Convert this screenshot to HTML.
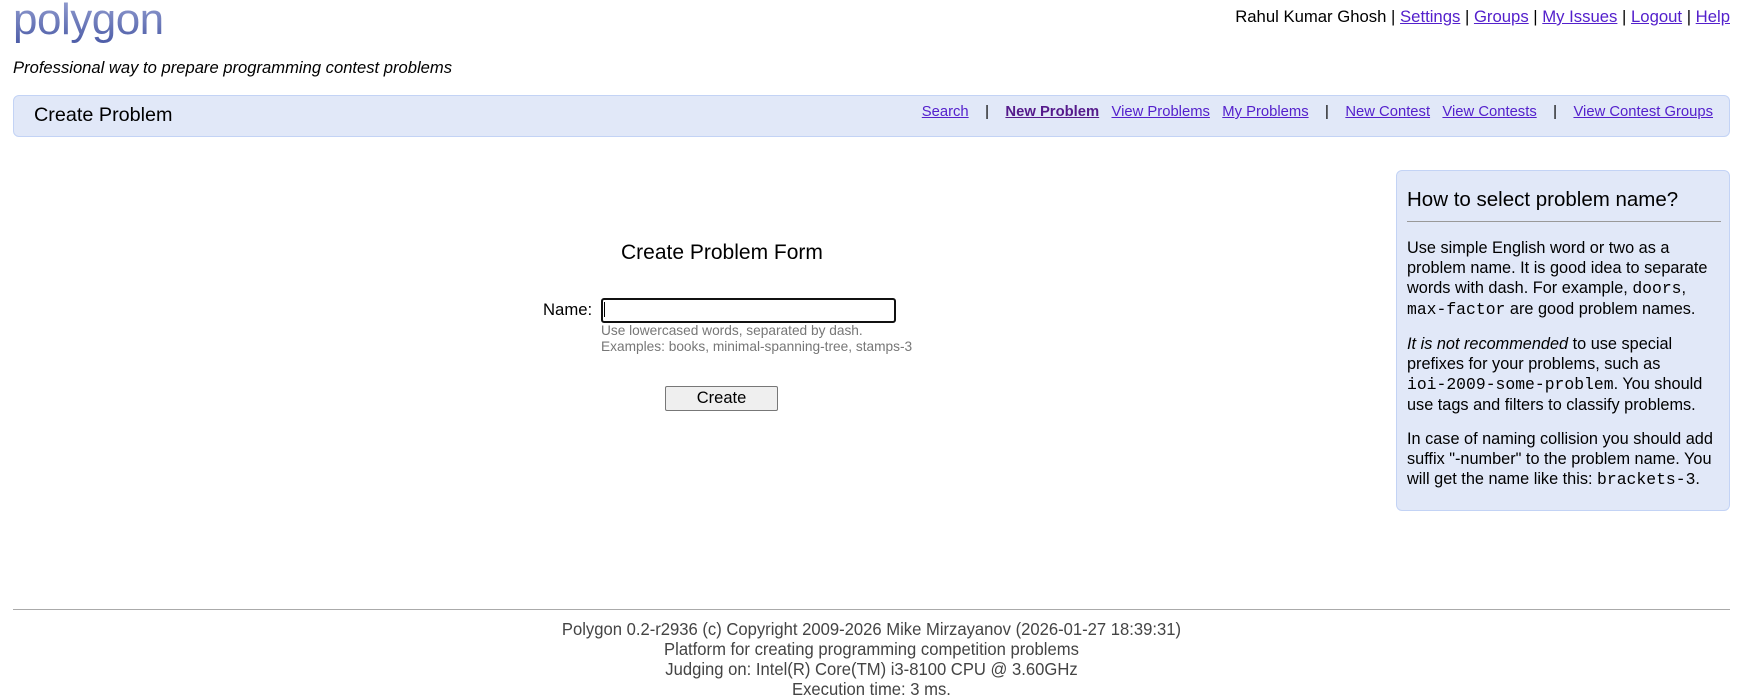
<!DOCTYPE html>
<html><head><meta charset="utf-8"><style>
body{margin:0;width:1751px;height:699px;position:relative;font-family:"Liberation Sans",sans-serif;background:#fff;color:#000;overflow:hidden}
.a{position:absolute;white-space:nowrap}
a{color:#5420cc;text-decoration:underline}
.logo{left:13px;top:-5px;font-size:44px;letter-spacing:-0.5px;background:linear-gradient(#9aa4d4,#4a5aa6);-webkit-background-clip:text;background-clip:text;color:transparent}
.nav{left:13px;top:95px;width:1715px;height:40px;background:#e1e8f8;border:1px solid #c3d3f5;border-radius:6px}
.panel{left:1396px;top:170px;width:332px;height:339px;background:#e1e8f8;border:1px solid #c3d3f5;border-radius:6px}
.panel .in{position:absolute;left:10px;top:17px;width:314px;font-size:16.3px;line-height:20px;white-space:normal}
.panel h3{margin:0;font-weight:normal;font-size:20.5px;line-height:24px;padding-bottom:9px;border-bottom:1px solid #999}
.panel p{margin:14px 0 0}
.panel p:first-of-type{margin-top:16px}
code{font-family:"Liberation Mono",monospace;font-size:16.4px;white-space:nowrap}
.foot{left:0;width:1743px;text-align:center;font-size:17.5px;color:#444;transform:scaleX(0.95);transform-origin:871px 0}
</style></head><body>
<div class="a logo">polygon</div>
<div class="a" style="right:21px;top:7px;font-size:16.7px">Rahul Kumar Ghosh | <a>Settings</a> | <a>Groups</a> | <a>My Issues</a> | <a>Logout</a> | <a>Help</a></div>
<div class="a" style="left:13px;top:58px;font-size:16.6px;font-style:italic">Professional way to prepare programming contest problems</div>
<div class="a nav"></div>
<div class="a" style="left:34px;top:104px;font-size:19.8px">Create Problem</div>
<div class="a" style="right:38px;top:104px;font-size:14.8px"><a>Search</a>&nbsp;&nbsp;&nbsp;&nbsp;|&nbsp;&nbsp;&nbsp;&nbsp;<a style="font-weight:bold;color:#551a8b">New Problem</a>&nbsp;&nbsp;&nbsp;<a>View Problems</a>&nbsp;&nbsp;&nbsp;<a>My Problems</a>&nbsp;&nbsp;&nbsp;&nbsp;|&nbsp;&nbsp;&nbsp;&nbsp;<a>New Contest</a>&nbsp;&nbsp;&nbsp;<a>View Contests</a>&nbsp;&nbsp;&nbsp;&nbsp;|&nbsp;&nbsp;&nbsp;&nbsp;<a>View Contest Groups</a></div>
<div class="a" style="left:621px;top:241px;font-size:21px">Create Problem Form</div>
<div class="a" style="left:543px;top:300px;font-size:16.7px">Name:</div>
<div class="a" style="left:601px;top:298px;width:291px;height:21px;border:2px solid #111;border-radius:3px"></div>
<div class="a" style="left:604px;top:302px;width:1px;height:15px;background:#000"></div>
<div class="a" style="left:601px;top:323px;font-size:13.7px;line-height:15.5px;color:#777">Use lowercased words, separated by dash.<br>Examples: books, minimal-spanning-tree, stamps-3</div>
<div class="a" style="left:665px;top:386px;width:111px;height:23px;border:1px solid #777;border-radius:2px;background:#efefef;font-size:16.5px;text-align:center;line-height:23px">Create</div>
<div class="a panel"><div class="in">
<h3>How to select problem name?</h3>
<p>Use simple English word or two as a problem name. It is good idea to separate words with dash. For example, <code>doors</code>, <code>max-factor</code> are good problem names.</p>
<p><i>It is not recommended</i> to use special prefixes for your problems, such as <code>ioi-2009-some-problem</code>. You should use tags and filters to classify problems.</p>
<p>In case of naming collision you should add suffix "-number" to the problem name. You will get the name like this: <code>brackets-3</code>.</p>
</div></div>
<div class="a" style="left:13px;top:609px;width:1717px;height:1px;background:#aaa"></div>
<div class="a foot" style="top:619px;line-height:20px">Polygon 0.2-r2936 (c) Copyright 2009-2026 Mike Mirzayanov (2026-01-27 18:39:31)<br>Platform for creating programming competition problems<br>Judging on: Intel(R) Core(TM) i3-8100 CPU @ 3.60GHz<br>Execution time: 3 ms.</div>
</body></html>
